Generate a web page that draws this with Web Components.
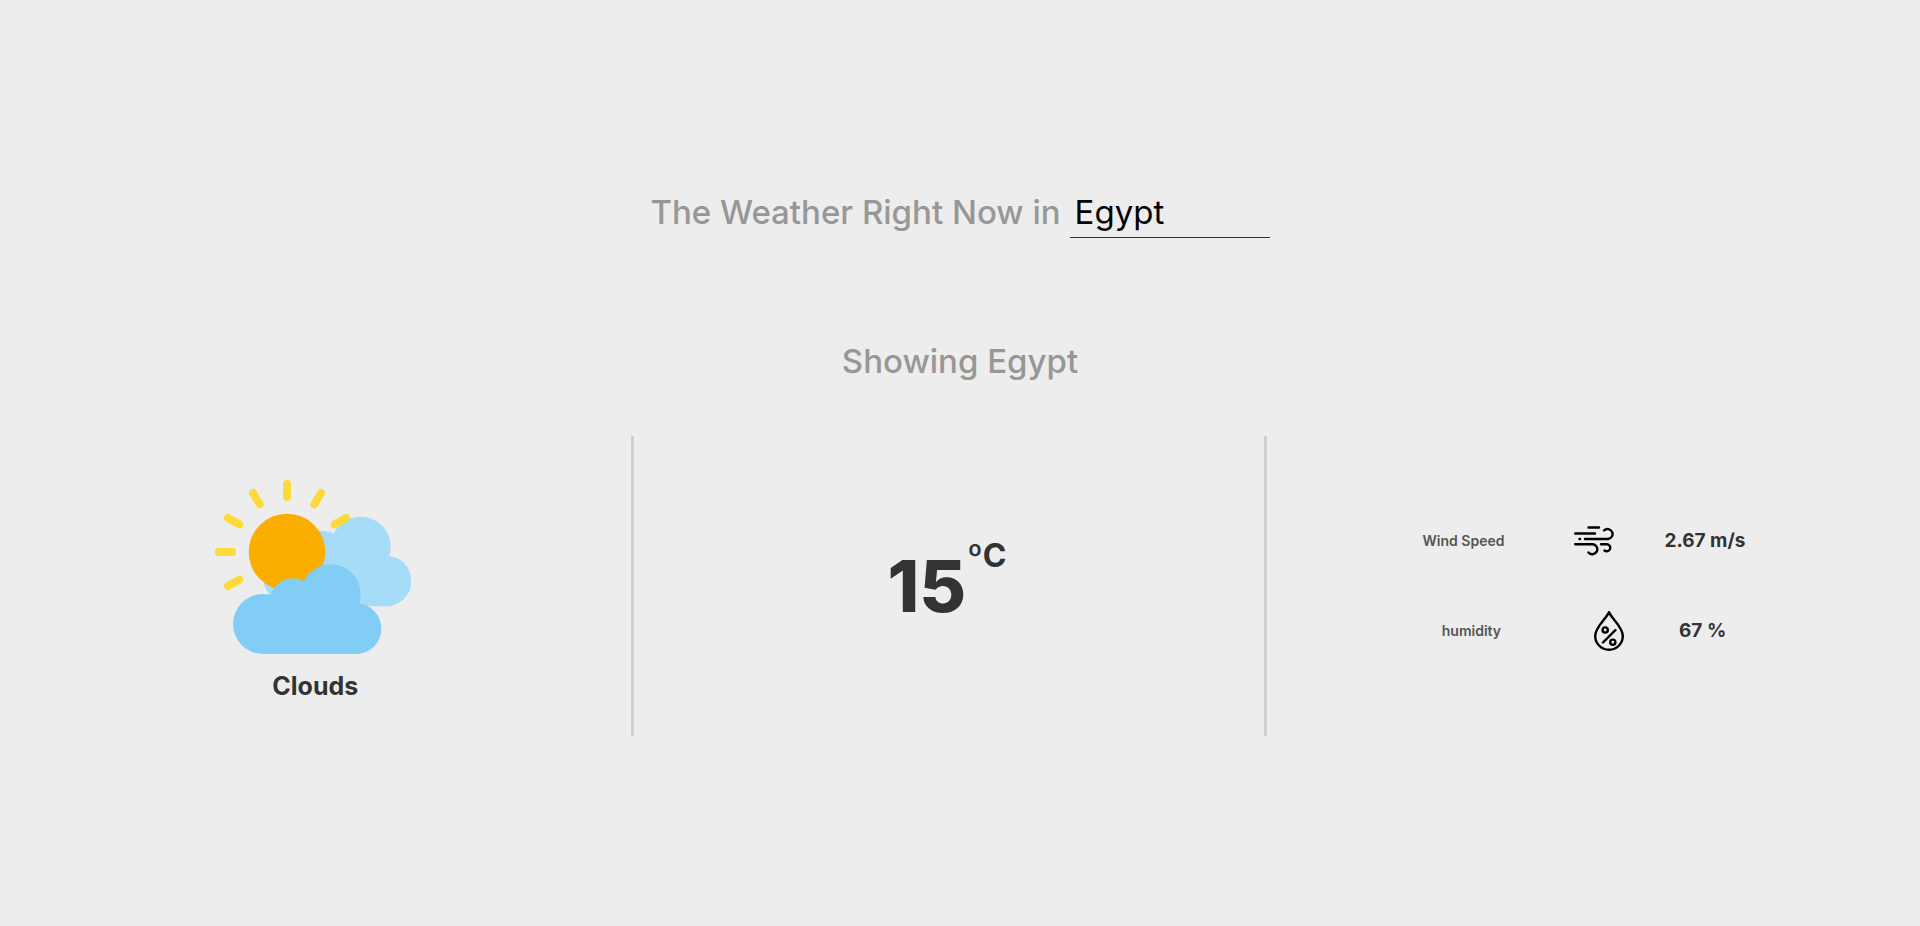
<!DOCTYPE html>
<html lang="en">
<head>
<meta charset="utf-8">
<meta name="viewport" content="width=device-width, initial-scale=1">
<title>Weather</title>
<style>
  html { background: #ededed; }
  body { margin: 0; color: #333; font-family: Inter, "Open Sans", sans-serif; }
</style>
</head>
<body>
<weather-app></weather-app>
<script>
const define = (name, html) => {
  const template = document.createElement('template');
  template.innerHTML = html;
  customElements.define(name, class extends HTMLElement {
    constructor() {
      super();
      this.attachShadow({ mode: 'open' }).append(template.content.cloneNode(true));
    }
  });
};

define('city-search', `
  <style>
    :host { display: block; }
    form { display: flex; justify-content: center; gap: 9px; font-size: 33px; line-height: 48px; }
    label { color: #979797; font-weight: 500; white-space: nowrap; }
    input { box-sizing: border-box; width: 200px; height: 50px; padding: 0 5px 1px; border: 0; border-bottom: 1px solid #333; background: none; color: #000; font: inherit; outline: 0; }
  </style>
  <form onsubmit="return false">
    <label for="city">The Weather Right Now in</label>
    <input id="city" type="text" value="Egypt" autocomplete="off">
  </form>`);

define('sun-clouds-icon', `
  <style>
    :host { display: block; }
    svg { display: block; width: 196px; height: 174px; }
  </style>
  <svg viewBox="45 45 588 522" aria-hidden="true">
    <defs>
      <g id="cloud">
        <circle cx="189" cy="477" r="90"/><circle cx="278" cy="408" r="68"/>
        <circle cx="392" cy="388" r="90"/><circle cx="468" cy="491" r="76"/>
        <path d="M212 390L314 349L478 416L468 567H189Z"/>
      </g>
    </defs>
    <use href="#cloud" fill="#a5dcf8" x="90" y="-143"/>
    <circle cx="261" cy="261" r="115" fill="#faaf00"/>
    <path d="M261 57V96M363 84L343 118M438 159L404 178M159 84L179 118M84 159L118 178M57 261H96M84 363L118 344" fill="none" stroke="#fdd93a" stroke-width="24" stroke-linecap="round"/>
    <use href="#cloud" fill="#81cdf5"/>
  </svg>`);

define('weather-condition', `
  <style>
    :host { display: flex; flex-direction: column; align-items: center; padding-top: 12px; }
    sun-clouds-icon { padding-right: 4px; }
    p { margin: 14px 0 0; font-size: 25px; line-height: 36px; font-weight: 700; }
  </style>
  <sun-clouds-icon></sun-clouds-icon>
  <p><slot></slot></p>`);

define('weather-temperature', `
  <style>
    :host { display: flex; align-items: flex-start; gap: 1px; font-weight: 700; padding-right: 4px; }
    .value { font-size: 72px; line-height: 92px; font-weight: 800; }
    .unit { font-size: 32px; line-height: 32px; }
  </style>
  <span class="value"><slot></slot></span><span class="unit">ºC</span>`);

define('wind-icon', `
  <style>:host { display: block; } svg { display: block; width: 40px; height: 40px; }</style>
  <svg viewBox="0 0 40 40" fill="none" stroke="#000" stroke-width="2.4" stroke-linecap="round" aria-hidden="true">
    <path d="M14.5 6.5H25M1.2 12.5H21M5.5 18H6M11 18H34A5 5 0 1 0 30 9.5M1.2 23.3H19A5 5 0 1 1 14.5 31.5M27 23.3H33A3.5 3.5 0 1 1 30.5 29.5"/>
  </svg>`);

define('humidity-icon', `
  <style>:host { display: block; } svg { display: block; width: 40px; height: 40px; }</style>
  <svg viewBox="0 0 40 40" fill="none" stroke="#000" stroke-width="2.4" stroke-linecap="round" stroke-linejoin="round" aria-hidden="true">
    <path d="M20 1.2C17 8 6.2 16 6.2 25A13.8 13.8 0 0 0 33.8 25C33.8 16 23 8 20 1.2ZM14 31.5L26.5 19"/>
    <circle cx="16.2" cy="19" r="2.6"/><circle cx="23.8" cy="31.2" r="2.6"/>
  </svg>`);

define('weather-detail', `
  <style>
    :host { display: flex; justify-content: center; align-items: center; gap: 50px; white-space: nowrap; }
    .label { padding-right: var(--label-space, 20px); color: #555; font-size: 14px; line-height: 20px; font-weight: 600; }
    .value { font-size: 19px; line-height: 28px; font-weight: 700; }
  </style>
  <span class="label"><slot name="label"></slot></span>
  <slot name="icon"></slot>
  <span class="value"><slot></slot></span>`);

define('weather-app', `
  <style>
    :host { display: block; padding-top: 188px; }
    h2 { margin: 99px 0 51px; color: #979797; font-size: 33px; line-height: 48px; font-weight: 500; text-align: center; }
    .panels { display: grid; grid-template-columns: 33% 33% 33%; }
    section { display: flex; flex-direction: column; align-items: center; justify-content: center; min-height: 300px; box-sizing: border-box; border-right: 3px solid #cfcfcf; }
    section:last-child { border: 0; }
    .details { gap: 50px; }
    .humidity { --label-space: 38px; }
  </style>
  <main>
    <city-search></city-search>
    <h2>Showing Egypt</h2>
    <div class="panels">
      <section><weather-condition>Clouds</weather-condition></section>
      <section><weather-temperature>15</weather-temperature></section>
      <section class="details">
        <weather-detail><span slot="label">Wind Speed</span><wind-icon slot="icon"></wind-icon>2.67 m/s</weather-detail>
        <weather-detail class="humidity"><span slot="label">humidity</span><humidity-icon slot="icon"></humidity-icon>67 %</weather-detail>
      </section>
    </div>
  </main>`);
</script>
</body>
</html>
